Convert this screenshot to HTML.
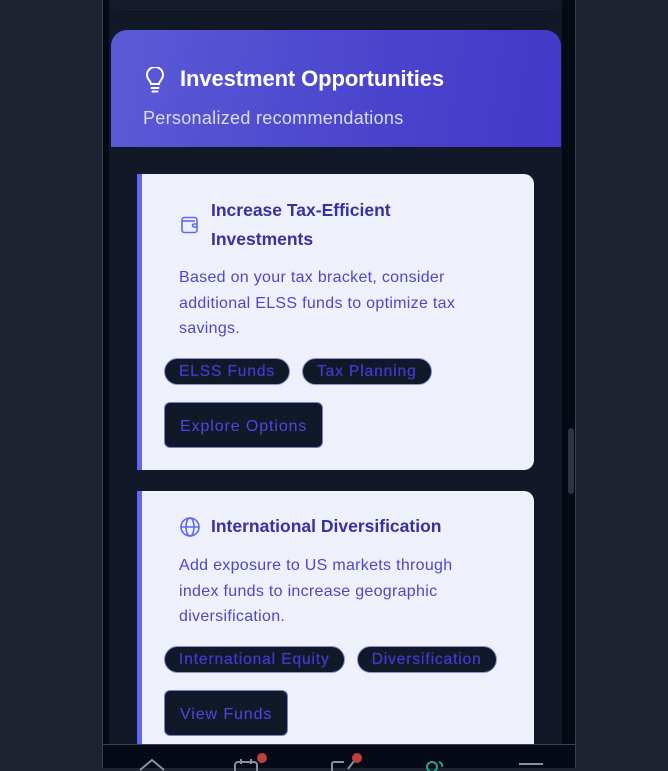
<!DOCTYPE html>
<html><head><meta charset="utf-8"><style>
*{margin:0;padding:0;box-sizing:border-box}
body{width:668px;height:768px;background:#1e2231;font-family:"Liberation Sans",sans-serif;position:relative;overflow:hidden}
.frame{position:absolute;left:102px;top:0;width:474px;height:768px;background:#060a14;border-left:1px solid #3a3f4d;border-right:1px solid #3a3f4d}
.content{position:absolute;left:109px;top:0;width:453px;height:768px;background:#121828}
.topcard{position:absolute;left:111px;top:-10px;width:450px;height:20px;background:#141a2a;border-bottom:1px solid #1c2232;border-radius:0 0 10px 10px}
.hdr{position:absolute;left:111px;top:30px;width:450px;height:117px;border-radius:16px 16px 0 0;background:linear-gradient(100deg,#5b5bd6,#4a44cc 60%,#4338ca)}
.hdr h1{position:absolute;left:69px;top:37px;font-size:22px;font-weight:bold;color:#fff;line-height:24px;letter-spacing:-.1px}
.hdr p{position:absolute;left:32px;top:78px;font-size:18px;color:#dcdcf5;letter-spacing:.3px}
.card{position:absolute;left:137px;width:397px;background:#eef0fc;border-radius:0 10px 10px 0;border-left:5px solid #6366f1}
.card h2{position:absolute;left:69px;font-size:17.5px;font-weight:bold;color:#3730a3;line-height:29px}
.card .d{position:absolute;left:37px;width:300px;font-size:16px;color:#4f46c8;line-height:25.5px;letter-spacing:.3px}
.tags{position:absolute;left:22px;display:flex;gap:12px}
.tag{height:27px;border-radius:14px;background:#111827;border:1px solid #8b8fd8;color:#4338ca;font-size:15.5px;line-height:25px;padding:0 14px;letter-spacing:.9px;white-space:nowrap;-webkit-text-stroke:.3px #4338ca}
.btn{position:absolute;left:22px;height:46px;border-radius:6px;background:#111827;border:1px solid #7c80c8;color:#4f46e5;font-size:16px;line-height:47px;padding:0 15px;letter-spacing:.9px}
.nav{position:absolute;left:103px;top:744px;width:472px;height:24px;background:#050a16;border-top:1px solid #3b4152}
.dot{position:absolute;width:10px;height:10px;border-radius:50%;background:#c0403c}
.scroll{position:absolute;left:568px;top:428px;width:6px;height:66px;border-radius:3px;background:#2d3344}
</style></head><body>
<div class="frame"></div>
<div class="content"></div>
<div class="scroll"></div>
<div class="topcard"></div>
<div class="hdr">
<svg style="position:absolute;left:34px;top:37px" width="20" height="26" viewBox="0 0 20 26" fill="none" stroke="#fff" stroke-width="2" stroke-linecap="round"><path d="M6 17c0-3-4-4.5-4-9a8 8 0 0 1 16 0c0 4.5-4 6-4 9z"/><path d="M6.5 21h7M7.5 24.5h5"/></svg>
<h1>Investment Opportunities</h1>
<p>Personalized recommendations</p>
</div>

<div class="card" style="top:174px;height:296px">
<svg style="position:absolute;left:38px;top:41px" width="20" height="20" viewBox="0 0 20 20" fill="none" stroke="#6366f1" stroke-width="1.6"><rect x="2" y="2.5" width="15" height="15" rx="2.5"/><path d="M2 6h13"/><path d="M17 9h-3a1.5 1.5 0 0 0 0 3h3"/></svg>
<h2 style="top:22px">Increase Tax-Efficient<br>Investments</h2>
<div class="d" style="top:91px">Based on your tax bracket, consider additional ELSS funds to optimize tax savings.</div>
<div class="tags" style="top:184px"><div class="tag">ELSS Funds</div><div class="tag">Tax Planning</div></div>
<div class="btn" style="top:228px">Explore Options</div>
</div>

<div class="card" style="top:491px;height:270px">
<svg style="position:absolute;left:37px;top:25px" width="22" height="22" viewBox="0 0 22 22" fill="none" stroke="#6366f1" stroke-width="1.6"><circle cx="11" cy="11" r="9"/><ellipse cx="11" cy="11" rx="4" ry="9"/><path d="M2 11h18"/></svg>
<h2 style="top:21px">International Diversification</h2>
<div class="d" style="top:62px">Add exposure to US markets through index funds to increase geographic diversification.</div>
<div class="tags" style="top:155px"><div class="tag">International Equity</div><div class="tag">Diversification</div></div>
<div class="btn" style="top:199px">View Funds</div>
</div>

<div class="nav">
<svg style="position:absolute;left:35px;top:12px" width="28" height="14" viewBox="0 0 28 14" fill="none" stroke="#8a909e" stroke-width="2"><path d="M2 13L14 3l12 10"/></svg>
<svg style="position:absolute;left:130px;top:14px" width="28" height="12" viewBox="0 0 28 12" fill="none" stroke="#8a909e" stroke-width="2"><rect x="2" y="3" width="22" height="14" rx="3"/><path d="M8 0v5M18 0v5"/></svg>
<div class="dot" style="left:154px;top:8px"></div>
<svg style="position:absolute;left:227px;top:14px" width="28" height="12" viewBox="0 0 28 12" fill="none" stroke="#8a909e" stroke-width="2"><path d="M14 3H4a2 2 0 0 0-2 2v8M24 2L18 10"/></svg>
<div class="dot" style="left:249px;top:8px"></div>
<svg style="position:absolute;left:320px;top:14px" width="24" height="12" viewBox="0 0 24 12" fill="none" stroke="#2fa38a" stroke-width="2"><circle cx="9" cy="8" r="5"/><path d="M16 3a4 4 0 0 1 3 5"/></svg>
<div style="position:absolute;left:416px;top:18px;width:24px;height:2px;background:#8a909e"></div>
</div>
</body></html>
